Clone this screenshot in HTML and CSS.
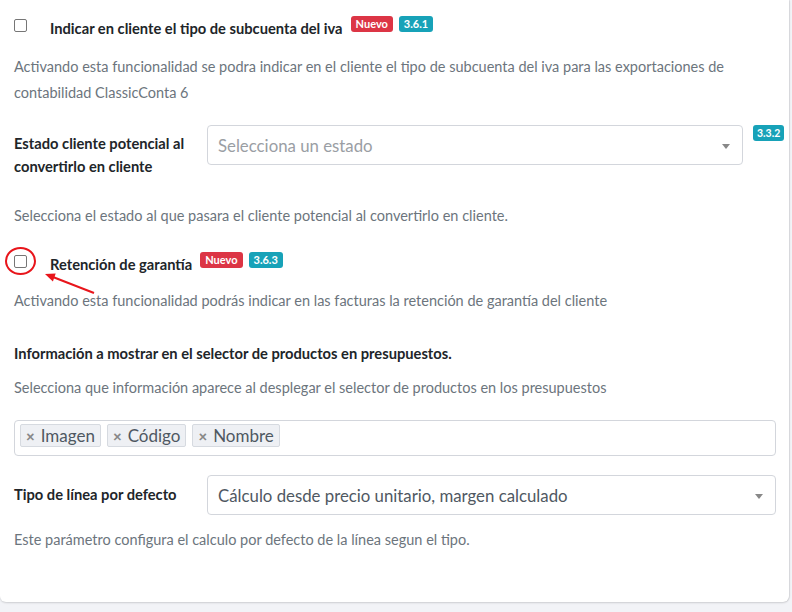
FILE: index.html
```html
<!DOCTYPE html>
<html lang="es">
<head>
<meta charset="utf-8">
<title>Ajustes</title>
<link rel="stylesheet" href="styles.css">
</head>
<body>
<div class="card">
  <div class="check-row first">
    <span class="checkbox"></span>
    <span class="check-label">Indicar en cliente el tipo de subcuenta del iva</span>
    <span class="badge red">Nuevo</span>
    <span class="badge teal">3.6.1</span>
  </div>
  <p class="desc desc-tall">Activando esta funcionalidad se podra indicar en el cliente el tipo de subcuenta del iva para las exportaciones de contabilidad ClassicConta 6</p>

  <div class="field-row estado">
    <label class="field-label">Estado cliente potencial al convertirlo en cliente</label>
    <div class="select placeholder"><span>Selecciona un estado</span><span class="caret"></span></div>
    <span class="badge teal small">3.3.2</span>
  </div>
  <p class="desc d2">Selecciona el estado al que pasara el cliente potencial al convertirlo en cliente.</p>

  <div class="check-row second">
    <span class="checkbox-wrap">
      <span class="checkbox"></span>
      <span class="ring"></span>
    </span>
    <span class="check-label">Retención de garantía</span>
    <span class="badge red">Nuevo</span>
    <span class="badge teal">3.6.3</span>
    <svg class="arrow" width="66" height="30" viewBox="0 0 66 30">
      <line x1="52" y1="24" x2="9" y2="7.3" stroke="#e8151b" stroke-width="2"/>
      <polygon points="3,5 13.7,4.6 10.9,12.6" fill="#e8151b"/>
    </svg>
  </div>
  <p class="desc d3">Activando esta funcionalidad podrás indicar en las facturas la retención de garantía del cliente</p>

  <h4 class="title">Información a mostrar en el selector de productos en presupuestos.</h4>
  <p class="desc d4">Selecciona que información aparece al desplegar el selector de productos en los presupuestos</p>

  <div class="tags">
    <span class="tag"><span class="x">×</span>Imagen</span>
    <span class="tag"><span class="x">×</span>Código</span>
    <span class="tag"><span class="x">×</span>Nombre</span>
  </div>

  <div class="field-row tipo">
    <label class="field-label">Tipo de línea por defecto</label>
    <div class="select"><span>Cálculo desde precio unitario, margen calculado</span><span class="caret"></span></div>
  </div>
  <p class="desc d5">Este parámetro configura el calculo por defecto de la línea segun el tipo.</p>
</div>
</body>
</html>
```

FILE: styles.css
```css
* { box-sizing: border-box; }
html, body { margin: 0; padding: 0; }
body {
  background: #f2f3f7;
  font-family: "Lato", "Open Sans", sans-serif;
  width: 792px;
  height: 612px;
  overflow: hidden;
}
.card {
  width: 789px;
  height: 602px;
  background: #fff;
  border-radius: 0 0 6px 6px;
  box-shadow: 0 1px 2px rgba(0,0,0,0.15), 1px 0 1px rgba(0,0,0,0.08);
  padding: 15px 13px 0 14px;
}
.check-row {
  display: flex;
  align-items: center;
  height: 20px;
  position: relative;
}
.checkbox {
  display: block;
  width: 13px;
  height: 13px;
  border: 1px solid #767676;
  border-radius: 2px;
  background: #fff;
}
.checkbox-wrap { position: relative; display: block; }
.ring {
  position: absolute;
  left: -9px;
  top: -8px;
  width: 31px;
  height: 28px;
  border: 2px solid #e8151b;
  border-radius: 50%;
}
.check-label {
  margin-left: 23px;
  font-size: 14.7px;
  font-weight: 700;
  color: #212529;
  margin-right: 8px;
  margin-top: 5px;
}
.badge {
  display: inline-block;
  font-size: 11px;
  font-weight: 700;
  color: #fff;
  padding: 2px 5px;
  line-height: 12px;
  border-radius: 3px;
  margin-right: 6px;
  margin-top: -3px;
}
.badge.red { background: #dc3545; }
.badge.teal { background: #17a2b8; }
.arrow { position: absolute; left: 28px; top: 18px; }
.desc {
  margin: 0;
  font-size: 14.5px;
  color: #6c757d;
  line-height: 22px;
}
.desc-tall { margin-top: 19px; line-height: 26px; }
.field-row { display: flex; align-items: flex-start; }
.estado { margin-top: 19px; }
.field-label {
  width: 193px;
  flex: none;
  font-size: 14.7px;
  font-weight: 700;
  color: #212529;
  line-height: 23px;
  padding-top: 7px;
}
.select {
  flex: none;
  height: 40px;
  border: 1px solid #d3d6dc;
  border-radius: 4px;
  display: flex;
  align-items: center;
  justify-content: space-between;
  padding: 1px 12px 0 10px;
  font-size: 16.8px;
  color: #4f5862;
}
.estado .select { width: 536px; }
.placeholder { color: #9a9ea4; }
.caret {
  width: 0; height: 0;
  border-left: 4px solid transparent;
  border-right: 4px solid transparent;
  border-top: 5px solid #888;
  margin-top: 2px;
}
.small { margin-left: 10px; margin-top: 0; padding: 2px 4px; font-size: 10.5px; }
.d2 { margin-top: 27px; }
.second { margin-top: 24px; }
.d3 { margin-top: 19px; }
.title {
  margin: 30px 0 0;
  font-size: 14.7px;
  font-weight: 700;
  color: #212529;
  line-height: 22px;
}
.d4 { margin-top: 13px; }
.tags {
  margin-top: 21px;
  height: 36px;
  border: 1px solid #d3d6dc;
  border-radius: 4px;
  padding: 3px 5px;
  display: flex;
  gap: 6px;
  align-items: flex-start;
}
.tag {
  height: 23px;
  display: inline-flex;
  align-items: center;
  background: #eef0f4;
  border: 1px solid #d6dae0;
  border-radius: 2px;
  padding: 0 5px 0 5px;
  font-size: 17px;
  color: #4f5862;
}
.x { color: #888; font-weight: 900; font-size: 15px; margin-right: 6px; }
.tipo { margin-top: 19px; }
.tipo .field-label { padding-top: 8px; }
.tipo .select { width: 569px; }
.d5 { margin-top: 14px; }
```
